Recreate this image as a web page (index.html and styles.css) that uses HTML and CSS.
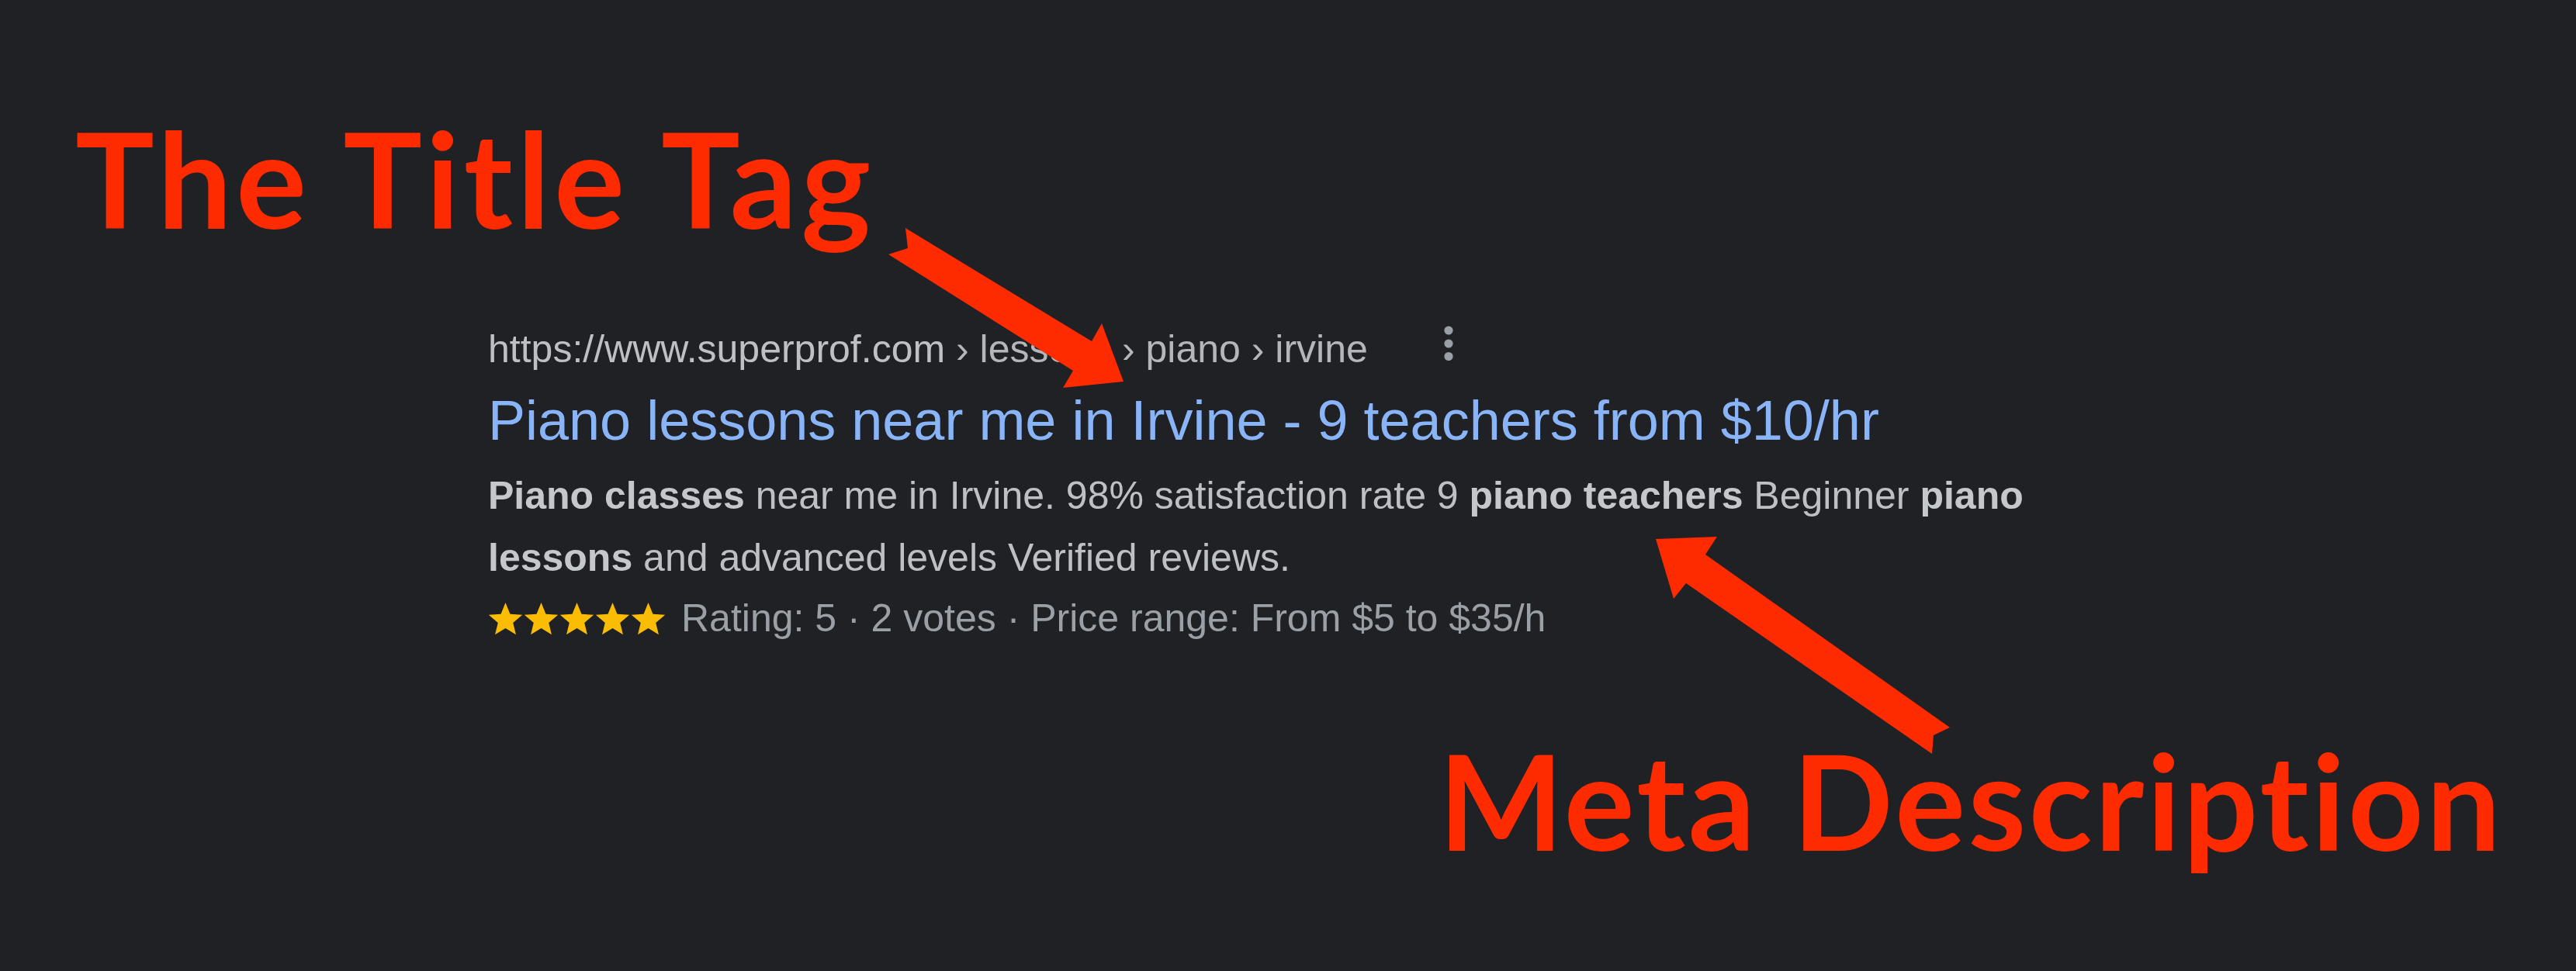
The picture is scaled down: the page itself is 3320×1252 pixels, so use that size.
FILE: index.html
```html
<!DOCTYPE html>
<html lang="en">
<head>
<meta charset="utf-8">
<title>The Title Tag and the Meta Description</title>
<link rel="stylesheet" href="styles.css">
</head>
<body>
<main class="canvas">
  <h1 class="label label-title">The Title Tag</h1>
  <article class="result">
    <div class="result-url">
      <cite class="url"><span class="url-domain">https://www.superprof.com</span><span class="url-path"> › lessons › piano › irvine</span></cite>
      <svg class="more" viewBox="0 0 12 45" width="12" height="45" aria-hidden="true">
        <circle cx="6" cy="6" r="5.6"/>
        <circle cx="6" cy="23" r="5.6"/>
        <circle cx="6" cy="39.5" r="5.6"/>
      </svg>
    </div>
    <h3 class="result-title">Piano lessons near me in Irvine - 9 teachers from $10/hr</h3>
    <p class="result-desc"><b>Piano classes</b> near me in Irvine. 98% satisfaction rate 9 <b>piano teachers</b> Beginner <b>piano lessons</b> and advanced levels Verified reviews.</p>
    <div class="result-rating">
      <span class="stars" aria-label="5 stars">
        <svg class="star" viewBox="0 0 24 23"><polygon points="12,0.6 15.2,8.4 23.6,9 17.2,14.5 19.2,22.6 12,18.2 4.8,22.6 6.8,14.5 0.4,9 8.8,8.4"/></svg>
        <svg class="star" viewBox="0 0 24 23"><polygon points="12,0.6 15.2,8.4 23.6,9 17.2,14.5 19.2,22.6 12,18.2 4.8,22.6 6.8,14.5 0.4,9 8.8,8.4"/></svg>
        <svg class="star" viewBox="0 0 24 23"><polygon points="12,0.6 15.2,8.4 23.6,9 17.2,14.5 19.2,22.6 12,18.2 4.8,22.6 6.8,14.5 0.4,9 8.8,8.4"/></svg>
        <svg class="star" viewBox="0 0 24 23"><polygon points="12,0.6 15.2,8.4 23.6,9 17.2,14.5 19.2,22.6 12,18.2 4.8,22.6 6.8,14.5 0.4,9 8.8,8.4"/></svg>
        <svg class="star" viewBox="0 0 24 23"><polygon points="12,0.6 15.2,8.4 23.6,9 17.2,14.5 19.2,22.6 12,18.2 4.8,22.6 6.8,14.5 0.4,9 8.8,8.4"/></svg>
      </span>
      <span class="rating-text">Rating: 5 · 2 votes · Price range: From $5 to $35/h</span>
    </div>
  </article>
  <h2 class="label label-meta">Meta Description</h2>
  <svg class="arrows" viewBox="0 0 3320 1252" width="3320" height="1252" aria-hidden="true">
    <polygon points="1167,294 1407,440 1420,417 1448,492 1370,500 1383,478 1145,328 1170,320"/>
    <polygon points="2134,695 2213,692 2198,715 2513,938 2492,948 2490,972 2173,752 2157,772"/>
  </svg>
</main>
</body>
</html>
```

FILE: styles.css
```css
html, body {
  margin: 0;
  padding: 0;
}

body {
  background: #202124;
  width: 3320px;
  height: 1252px;
  overflow: hidden;
}

.canvas {
  position: relative;
  box-sizing: border-box;
  height: 1252px;
  padding: 144px 97px 0;
  display: flex;
  flex-direction: column;
}

.label {
  margin: 0;
  font-family: Lato, "Open Sans", sans-serif;
  font-weight: 700;
  font-size: 170px;
  line-height: 170px;
  font-variant-ligatures: none;
  font-feature-settings: "liga" 0, "dlig" 0;
  color: #fe2a00;
  white-space: nowrap;
}

.label-title {
  align-self: flex-start;
  letter-spacing: 5.5px;
}

.label-meta {
  align-self: flex-end;
  margin-top: 111px;
  margin-right: -3.5px;
  letter-spacing: 3.5px;
}

.result {
  margin: 106px 0 0 532px;
  width: 2100px;
  font-family: "Liberation Sans", Arial, sans-serif;
}

.result-url {
  display: flex;
  align-items: flex-start;
  font-size: 50px;
  line-height: 60px;
}

.url {
  font-style: normal;
  color: #bdc1c6;
  white-space: nowrap;
}

.url-path {
  color: #b3b7bc;
}

.more {
  flex: none;
  margin-left: 98px;
  fill: #9aa0a6;
}

.result-title {
  margin: 17px 0 0;
  font-size: 72px;
  line-height: 90px;
  font-weight: 400;
  color: #8ab4f8;
  white-space: nowrap;
}

.result-desc {
  margin: 12px 0 0;
  font-size: 50px;
  line-height: 80px;
  color: #bdc1c6;
}

.result-desc b {
  font-weight: 700;
  color: #c4c7cb;
}

.result-rating {
  display: flex;
  align-items: center;
  height: 76px;
  gap: 20px;
  font-size: 50px;
  line-height: 76px;
  color: #9aa0a6;
  white-space: nowrap;
}

.stars {
  display: flex;
  gap: 1px;
}

.star {
  display: block;
  width: 45px;
  height: 43px;
  fill: #fbbc04;
}

.arrows {
  position: absolute;
  left: 0;
  top: 0;
  pointer-events: none;
  fill: #fe2a00;
}
```
